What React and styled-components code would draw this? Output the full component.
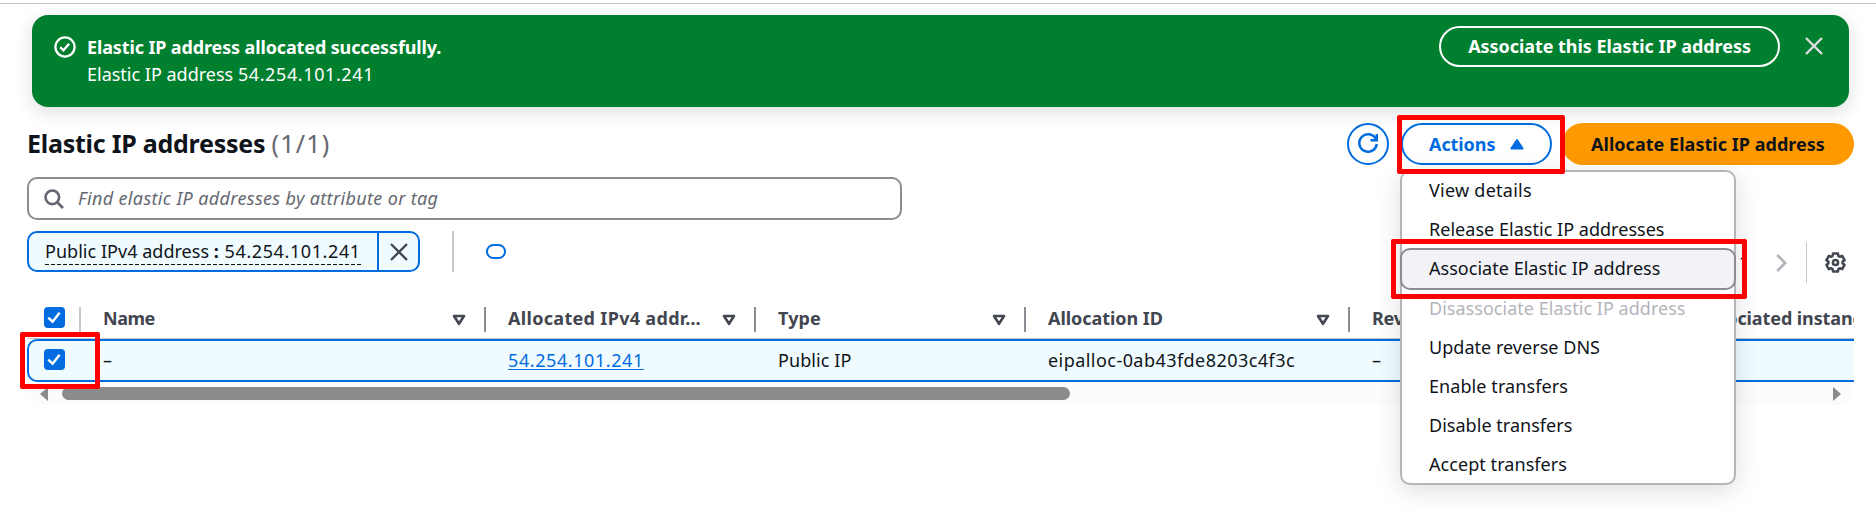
import React from 'react';
import styled, { createGlobalStyle, css } from 'styled-components';

const GlobalStyle = createGlobalStyle`
  *, *::before, *::after { box-sizing: border-box; }
  body {
    margin: 0;
    background: #fff;
    color: #0f141a;
    font: 400 18px/25px "Noto Sans", "Open Sans", sans-serif;
    overflow: hidden;
  }
  button { font: inherit; cursor: pointer; }
`;

const blue = '#006ce0';
const slate = '#424650';

const Page = styled.main`
  position: relative;
  width: 1876px;
  height: 525px;
  overflow: hidden;
  padding-top: 3px;
`;

const TopRule = styled.div`
  height: 1px;
  background: #c6c6cd;
`;

/* ---------- Flash message ---------- */

const Flash = styled.section`
  display: flex;
  align-items: flex-start;
  height: 92px;
  margin: 11px 27px 0 32px;
  padding: 11px 26px 0 22px;
  border-radius: 16px;
  background: #00802f;
  color: #fff;
  box-shadow: 0 5px 18px 1px rgba(0, 7, 22, 0.12);
`;

const FlashIcon = styled.svg`
  width: 22px;
  height: 22px;
  margin: 10px 11px 0 0;
`;

const FlashText = styled.div`
  flex: 1;
  padding-top: 8px;
  line-height: 27px;
  white-space: nowrap;
`;

const FlashTitle = styled.div`
  font-weight: 700;
  letter-spacing: -0.13px;
`;

const Numeric = styled.span`
  letter-spacing: 0.6px;
`;

const FlashButton = styled.button`
  width: 341px;
  height: 41px;
  padding: 0 0 1px;
  border: 2px solid #fff;
  border-radius: 21px;
  background: transparent;
  color: #fff;
  font-weight: 700;
  letter-spacing: -0.05px;
  white-space: nowrap;
`;

const DismissButton = styled.button`
  display: flex;
  margin: 11px 0 0 25px;
  padding: 0;
  border: 0;
  background: none;
`;

/* ---------- Header ---------- */

const Header = styled.header`
  display: flex;
  align-items: center;
  height: 42px;
  margin: 16px 22px 0 27px;
`;

const Title = styled.h2`
  flex: 1;
  margin: 0;
  padding-bottom: 2px;
  font-size: 25px;
  font-weight: 700;
  line-height: 30px;
  letter-spacing: -0.25px;
`;

const Counter = styled.span`
  color: #656871;
  font-weight: 400;
  letter-spacing: 1.2px;
`;

const RefreshButton = styled.button`
  display: grid;
  place-items: center;
  width: 42px;
  height: 42px;
  padding: 0;
  border: 2px solid ${blue};
  border-radius: 50%;
  background: #fff;
`;

const ActionsWrap = styled.div`
  position: relative;
  margin: 0 10px 0 12px;
`;

const ActionsButton = styled.button`
  display: flex;
  align-items: center;
  gap: 15px;
  width: 151px;
  height: 42px;
  padding: 0 0 0 26px;
  border: 2px solid ${blue};
  border-radius: 21px;
  background: #fff;
  color: ${blue};
  font-weight: 700;
  letter-spacing: -0.08px;
`;

const PrimaryButton = styled.button`
  width: 292px;
  height: 42px;
  padding: 0;
  border: 0;
  border-radius: 21px;
  background: #ff9900;
  color: #0f141a;
  font-weight: 700;
  letter-spacing: 0.03px;
  white-space: nowrap;
`;

const Menu = styled.ul`
  position: absolute;
  z-index: 5;
  top: 47px;
  left: -1px;
  width: 336px;
  height: 315px;
  margin: 0;
  padding: 0;
  list-style: none;
  border-radius: 10px;
  background: #fff;
  box-shadow: inset 0 0 0 2px #b4b4bb, 0 5px 25px 1px rgba(0, 7, 22, 0.13);
`;

const MenuItem = styled.li`
  height: 42px;
  padding: 6px 0 7px 27px;
  border: 2px solid transparent;
  border-radius: 10px;
  letter-spacing: ${(p) => p.$spacing || '0.03px'};
  white-space: nowrap;
  & + & { margin-top: -2.8px; }
  ${(p) => p.$active && css`
    border-color: #8c8c94;
    background: #f3f3f7;
  `}
  ${(p) => p.$disabled && css`color: #b4b4bb;`}
`;

/* ---------- Filtering ---------- */

const SearchBox = styled.div`
  display: flex;
  align-items: center;
  width: 875px;
  height: 43px;
  margin: 12px 0 0 27px;
  padding: 0 15px;
  border: 2px solid #8c8c94;
  border-radius: 10px;
  background: #fff;
`;

const Placeholder = styled.span`
  padding: 0 0 1px 14px;
  color: #656871;
  font-style: italic;
  letter-spacing: 0.35px;
`;

const Tools = styled.div`
  display: flex;
  align-items: flex-start;
  height: 52px;
  margin: 11px 30px 0 27px;
`;

const Token = styled.div`
  display: flex;
  width: 393px;
  height: 41px;
  border: 2px solid ${blue};
  border-radius: 10px;
  background: #f0fbff;
`;

const TokenLabel = styled.span`
  width: 316px;
  height: 27px;
  margin: 5px 16px 0 16px;
  line-height: 26px;
  letter-spacing: 0.03px;
  white-space: nowrap;
  background: repeating-linear-gradient(90deg, #0f141a 0 4px, transparent 4px 6px) bottom / 100% 1px no-repeat;
`;

const TokenColon = styled.b`
  margin-right: 1px;
`;

const TokenDismiss = styled.button`
  display: grid;
  place-items: center;
  flex: 1;
  padding: 0;
  border: 0;
  border-left: 2px solid ${blue};
  background: none;
`;

const Separator = styled.div`
  width: ${(p) => p.$width}px;
  height: 41px;
  margin-left: ${(p) => p.$gap}px;
  background: #c6c6cd;
`;

const EmptyPill = styled.button`
  width: 20px;
  height: 15px;
  margin: 13px 0 0 32px;
  padding: 0;
  border: 2px solid ${blue};
  border-radius: 8px;
  background: #fff;
`;

const Pager = styled.div`
  display: flex;
  align-items: center;
  align-self: flex-end;
  height: 41px;
  margin-left: auto;
`;

const PageNumber = styled.span`
  margin-right: 27px;
  padding-bottom: 1px;
`;

const GearIcon = styled.svg`
  margin-left: 18px;
`;

/* ---------- Table ---------- */

const TableWrap = styled.div`
  width: 1827px;
  margin-left: 27px;
  overflow: hidden;
`;

const TableRow = styled.div`
  display: grid;
  grid-template-columns: 54px 405px 270px 270px 324px 324px 324px;
  width: 1971px;
`;

const HeadRow = styled(TableRow)`
  height: 56px;
  padding-top: 24px;
  border-bottom: 1px solid #c6c6cd;
`;

const BodyRow = styled(TableRow)`
  height: 43px;
  border: 2px solid ${blue};
  border-radius: 10px;
  background: #f0fbff;
`;

const HeadCell = styled.div`
  display: flex;
  align-items: flex-start;
  justify-content: space-between;
  height: 25px;
  padding: 0 18px 0 22px;
  border-right: 2px solid ${(p) => (p.$first ? '#c6c6cd' : '#8c8c94')};
  color: ${slate};
  font-weight: 700;
  line-height: 22px;
  letter-spacing: ${(p) => p.$spacing || '0'};
  white-space: nowrap;
  ${(p) => p.$first && 'padding: 0 0 0 17px;'}
`;

const SortIcon = styled.svg`
  width: 14px;
  height: 12px;
  margin-top: 7px;
`;

const Cell = styled.div`
  padding-left: ${(p) => (p.$first ? 15 : 20)}px;
  padding-top: ${(p) => (p.$first ? 8 : 7)}px;
  letter-spacing: ${(p) => p.$spacing || '0'};
  white-space: nowrap;
`;

const IpLink = styled.a`
  color: ${blue};
  letter-spacing: 0.58px;
  text-decoration: underline;
  text-decoration-thickness: 1px;
  text-underline-offset: 2px;
`;

const CheckboxBox = styled.span`
  display: grid;
  place-items: center;
  width: 21px;
  height: 21px;
  border-radius: 4px;
  background: ${blue};
`;

const ScrollTrack = styled.div`
  display: flex;
  align-items: center;
  justify-content: space-between;
  height: 23px;
  padding: 0 13px;
  border-radius: 0 0 20px 20px;
  background: #fcfcfc;
`;

const ScrollArrow = styled.svg`
  width: 8px;
  height: 14px;
`;

const ScrollThumb = styled.div`
  width: 1008px;
  height: 13px;
  margin: 0 auto 0 14px;
  border-radius: 7px;
  background: #8b8b8b;
`;

/* ---------- Annotations drawn over the page ---------- */

const Highlight = styled.div`
  position: absolute;
  z-index: 10;
  left: ${(p) => p.$x}px;
  top: ${(p) => p.$y}px;
  width: ${(p) => p.$w}px;
  height: ${(p) => p.$h}px;
  border: 5px solid #ff0000;
  border-radius: 2px;
  pointer-events: none;
`;

const Cross = ({ size, color }) => (
  <svg width={size} height={size} viewBox="0 0 18 18" fill="none" stroke={color} strokeWidth="2.4">
    <path d="M1 1l16 16M17 1L1 17" />
  </svg>
);

const Checkbox = () => (
  <CheckboxBox>
    <svg width="21" height="21" viewBox="0 0 21 21" fill="none" stroke="#fff" strokeWidth="2.5">
      <path d="M4.3 10.6l4.3 4.1 7-9" />
    </svg>
  </CheckboxBox>
);

const Sort = () => (
  <SortIcon viewBox="0 0 14 12" fill="none" stroke={slate} strokeWidth="2.6" strokeLinejoin="round">
    <path d="M2 2h10L7 9.8z" />
  </SortIcon>
);

const gearPath = (() => {
  const points = [];
  for (let i = 0; i < 6; i += 1) {
    const mid = -90 + i * 60;
    [[-24, 7.1], [-15, 9.4], [15, 9.4], [24, 7.1]].forEach(([offset, r]) => {
      const a = ((mid + offset) * Math.PI) / 180;
      points.push(`${(10.5 + r * Math.cos(a)).toFixed(2)} ${(10.5 + r * Math.sin(a)).toFixed(2)}`);
    });
  }
  return `M${points.join('L')}Z`;
})();

const menuItems = [
  { label: 'View details', spacing: '0.25px' },
  { label: 'Release Elastic IP addresses' },
  { label: 'Associate Elastic IP address', active: true },
  { label: 'Disassociate Elastic IP address', disabled: true },
  { label: 'Update reverse DNS' },
  { label: 'Enable transfers', spacing: '0.08px' },
  { label: 'Disable transfers' },
  { label: 'Accept transfers', spacing: '0.06px' },
];

const columns = [
  { label: 'Name', spacing: '-0.5px' },
  { label: 'Allocated IPv4 addr…', spacing: '0.32px' },
  { label: 'Type', spacing: '0.1px' },
  { label: 'Allocation ID', spacing: '-0.05px' },
  { label: 'Reverse DNS record', spacing: '-0.2px' },
  { label: 'Associated instance ID', spacing: '-0.1px' },
];

export default function App() {
  return (
    <Page>
      <GlobalStyle />
      <TopRule />
      <Flash>
        <FlashIcon viewBox="0 0 22 22" fill="none" stroke="#fff" strokeWidth="2.3">
          <circle cx="11" cy="11" r="9.6" />
          <path d="M6.2 11.2l3.2 3.1 5.8-6.6" />
        </FlashIcon>
        <FlashText>
          <FlashTitle>Elastic IP address allocated successfully.</FlashTitle>
          <div>Elastic IP address <Numeric>54.254.101.241</Numeric></div>
        </FlashText>
        <FlashButton>Associate this Elastic IP address</FlashButton>
        <DismissButton aria-label="Dismiss"><Cross size={18} color="#dedee3" /></DismissButton>
      </Flash>

      <Header>
        <Title>Elastic IP addresses <Counter>(1/1)</Counter></Title>
        <RefreshButton aria-label="Refresh">
          <svg width="20" height="20" viewBox="0 0 16 16" fill="none" stroke={blue} strokeWidth="2" overflow="visible">
            <path d="M10 5h5V0" />
            <path d="M15 8a7 7 0 1 1-.7-4" />
          </svg>
        </RefreshButton>
        <ActionsWrap>
          <ActionsButton>
            Actions
            <svg width="14" height="12" viewBox="0 0 14 12" fill={blue} stroke={blue} strokeWidth="2" strokeLinejoin="round">
              <path d="M7 2L12.6 10.5H1.4z" />
            </svg>
          </ActionsButton>
          <Menu>
            {menuItems.map((item) => (
              <MenuItem
                key={item.label}
                $active={item.active}
                $disabled={item.disabled}
                $spacing={item.spacing}
              >
                {item.label}
              </MenuItem>
            ))}
          </Menu>
        </ActionsWrap>
        <PrimaryButton>Allocate Elastic IP address</PrimaryButton>
      </Header>

      <SearchBox>
        <svg width="20" height="20" viewBox="0 0 20 20" fill="none" stroke="#656871" strokeWidth="2.6">
          <circle cx="8.3" cy="8.3" r="6.8" />
          <path d="M13 13l6 6" />
        </svg>
        <Placeholder>Find elastic IP addresses by attribute or tag</Placeholder>
      </SearchBox>

      <Tools>
        <Token>
          <TokenLabel>
            Public IPv4 address <TokenColon>:</TokenColon> <Numeric>54.254.101.241</Numeric>
          </TokenLabel>
          <TokenDismiss aria-label="Remove filter"><Cross size={18} color={slate} /></TokenDismiss>
        </Token>
        <Separator $width={2} $gap={32} />
        <EmptyPill aria-label="Clear filters" />
        <Pager>
          <PageNumber>1</PageNumber>
          <svg width="11" height="18" viewBox="0 0 11 18" fill="none" stroke="#b4b4bb" strokeWidth="2.6">
            <path d="M1.2 1l8 8-8 8" />
          </svg>
          <Separator $width={1} $gap={19} />
          <GearIcon width="21" height="21" viewBox="0 0 21 21" fill="none" stroke={slate} strokeWidth="2.5" strokeLinejoin="round">
            <path d={gearPath} />
            <circle cx="10.5" cy="10.5" r="2.6" />
          </GearIcon>
        </Pager>
      </Tools>

      <TableWrap>
        <HeadRow>
          <HeadCell $first><Checkbox /></HeadCell>
          {columns.map((c) => (
            <HeadCell key={c.label} $spacing={c.spacing}>{c.label}<Sort /></HeadCell>
          ))}
        </HeadRow>
        <BodyRow>
          <Cell $first><Checkbox /></Cell>
          <Cell>–</Cell>
          <Cell><IpLink>54.254.101.241</IpLink></Cell>
          <Cell $spacing="0.08px">Public IP</Cell>
          <Cell $spacing="0.45px">eipalloc-0ab43fde8203c4f3c</Cell>
          <Cell>–</Cell>
          <Cell />
        </BodyRow>
        <ScrollTrack>
          <ScrollArrow viewBox="0 0 8 14" fill="#8b8b8b"><path d="M8 0v14L0 7z" /></ScrollArrow>
          <ScrollThumb />
          <ScrollArrow viewBox="0 0 8 14" fill="#8b8b8b"><path d="M0 0v14l8-7z" /></ScrollArrow>
        </ScrollTrack>
      </TableWrap>

      <Highlight $x={1397} $y={115} $w={168} $h={59} />
      <Highlight $x={1391} $y={239} $w={356} $h={60} />
      <Highlight $x={20} $y={332} $w={80} $h={57} />
    </Page>
  );
}
